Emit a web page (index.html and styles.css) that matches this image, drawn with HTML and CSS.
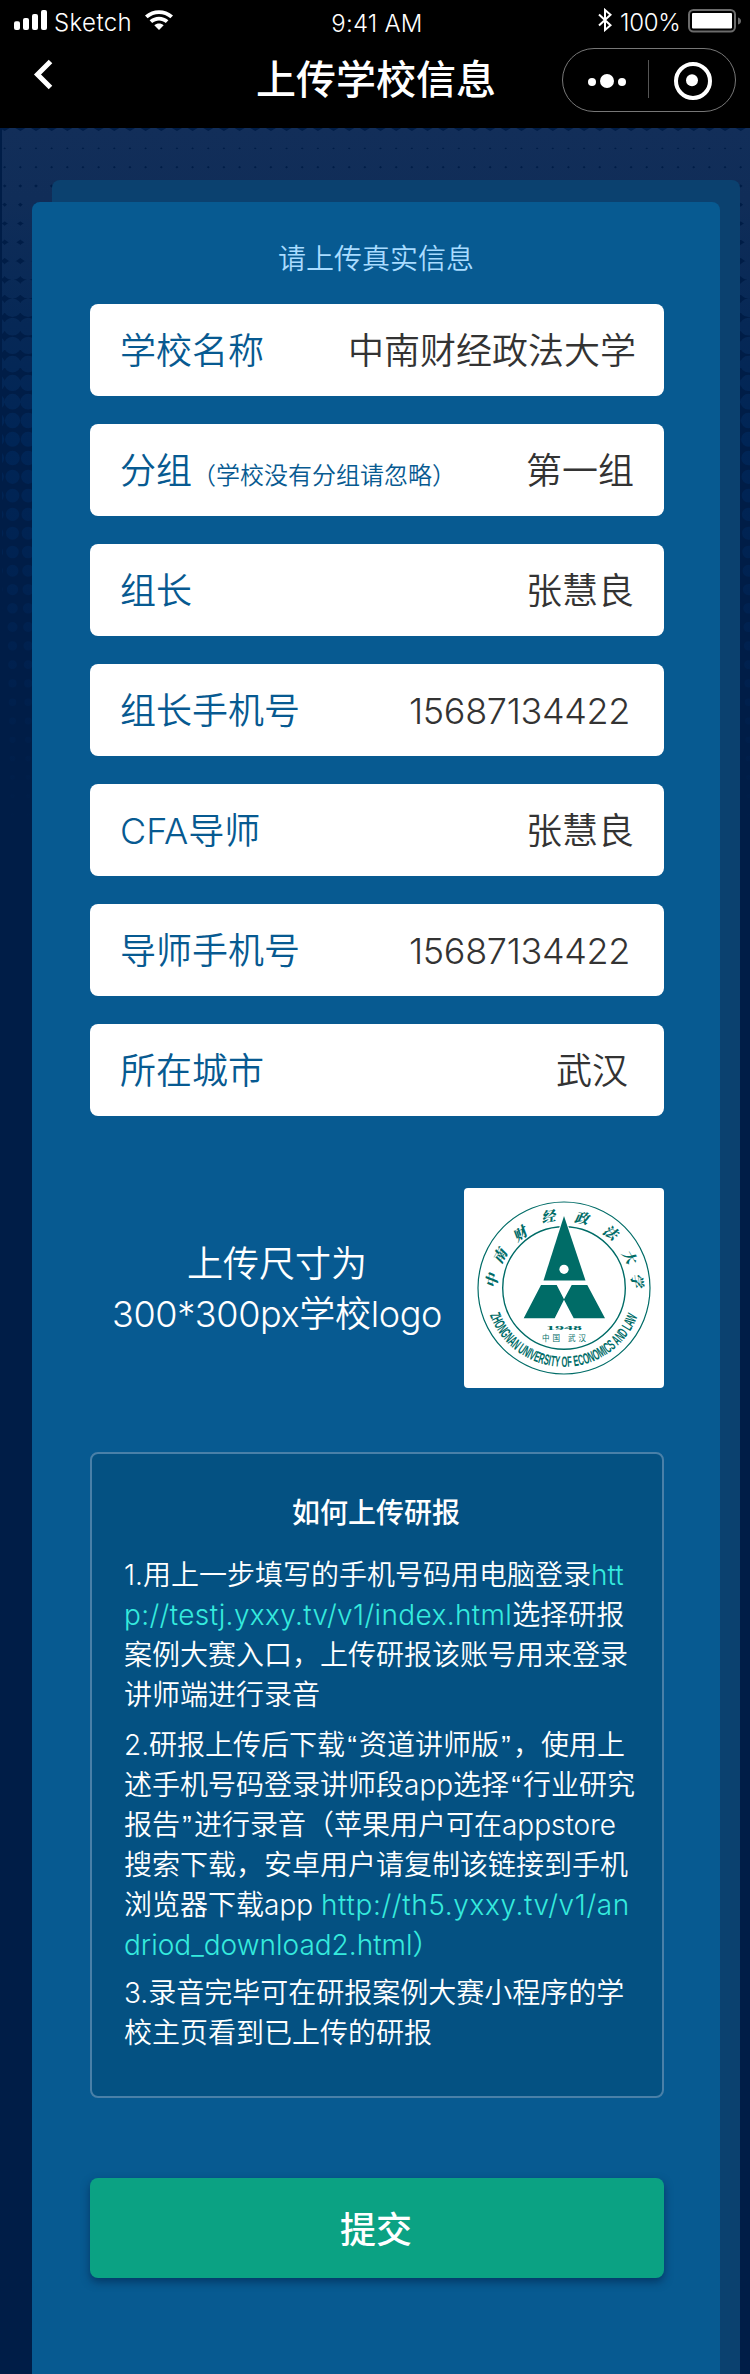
FILE: index.html
```html
<!DOCTYPE html>
<html lang="zh-CN">
<head>
<meta charset="utf-8">
<title>上传学校信息</title>
<link rel="stylesheet" href="styles.css">
</head>
<body>
<header class="header">
  <div class="status">
    <div class="status-left">
      <svg class="signal" width="33" height="20" viewBox="0 0 33 20" fill="#fff"><rect y="11.300" width="6" height="8.700" rx="2"/><rect x="9" y="8" width="6" height="12" rx="2"/><rect x="18" y="4" width="6" height="16" rx="2"/><rect x="27" width="6" height="20" rx="2"/></svg>
      <span class="carrier">Sketch</span>
      <svg class="wifi" width="28" height="20" viewBox="0 0 28 20" fill="#fff"><path d="M0 5.600C8-1.700 20-1.700 28 5.600L25.400 8.300C19 2.500 9 2.500 2.600 8.300Z"/><path d="M4.600 10.300C10 5.400 18 5.400 23.400 10.300L20.800 13C17 9.500 11 9.500 7.200 13Z"/><path d="M9.300 15.200C12 12.800 16 12.800 18.700 15.200L14 20Z"/></svg>
    </div>
    <span class="time">9:41 AM</span>
    <div class="status-right">
      <svg class="bluetooth" width="14" height="24" viewBox="0 0 14 24" fill="none" stroke="#fff" stroke-width="2"><path d="M1 6.500L12.500 17.300L7 22V2L12.500 6.700L1 17.500"/></svg>
      <span class="percent">100%</span>
      <svg width="53" height="24" viewBox="0 0 53 24"><rect x="1" y="1" width="46" height="21.500" rx="4.500" fill="none" stroke="#6b6b6b" stroke-width="2"/><rect x="4" y="4" width="40" height="15.500" rx="1" fill="#fff"/><path d="M50 8.500Q53 9.500 53 12T50 15.500Z" fill="#6b6b6b"/></svg>
    </div>
  </div>
  <div class="nav">
    <svg class="back" width="20" height="32" viewBox="0 0 20 32" fill="none" stroke="#fff" stroke-width="5"><path d="M17.500 2.500L4.500 15.500L17.500 28.500"/></svg>
    <h1 class="title">上传学校信息</h1>
    <svg class="capsule" width="174" height="64" viewBox="0 0 174 64" fill="#fff"><rect x=".5" y=".5" width="173" height="63" rx="31.500" fill="none" stroke="#777"/><circle cx="30" cy="34" r="4"/><circle cx="45" cy="33" r="7"/><circle cx="60" cy="34" r="4"/><path d="M86.500 12V50" stroke="#555"/><circle cx="131" cy="33" r="17" fill="none" stroke="#fff" stroke-width="4"/><circle cx="130" cy="32.300" r="6"/></svg>
  </div>
</header>

<main class="page">
  <svg class="pattern" id="pattern" width="750" height="720" viewBox="0 128 750 720"></svg>
  <div class="card-back"></div>
  <section class="card">
    <p class="hint">请上传真实信息</p>
    <div class="fields">
      <div class="field"><span class="label">学校名称</span><span class="value">中南财经政法大学</span></div>
      <div class="field"><span class="label">分组<small class="note">（学校没有分组请忽略）</small></span><span class="value name">第一组</span></div>
      <div class="field"><span class="label">组长</span><span class="value name">张慧良</span></div>
      <div class="field"><span class="label">组长手机号</span><span class="value phone">15687134422</span></div>
      <div class="field"><span class="label">CFA导师</span><span class="value name">张慧良</span></div>
      <div class="field"><span class="label">导师手机号</span><span class="value phone">15687134422</span></div>
      <div class="field"><span class="label">所在城市</span><span class="value city">武汉</span></div>
    </div>

    <div class="upload">
      <p class="upload-text">上传尺寸为<br><span class="size">300*300px学校logo</span></p>
      <svg class="emblem" width="200" height="200" viewBox="0 0 200 200">
        <defs><path id="arc" d="M25.800 127A79 79 0 0 0 174.200 127"/></defs>
        <g fill="none" stroke="#006c67"><circle cx="100" cy="100" r="86" stroke-width="1.200"/><circle cx="100" cy="100" r="61.300" stroke-width="1.400"/></g>
        <path d="M100 28L121.500 92.500H79.500Z" fill="#006c67" stroke="#fff" stroke-width="2" paint-order="stroke"/>
        <circle cx="100" cy="81.300" r="4.600" fill="#fff"/>
        <path d="M77 97H92.700L100 111.200L107.700 97H123.300L141 130.300H109.700L100 111.800L90.700 130.300H59.700Z" fill="#006c67"/>
        <g class="seal">
          <text transform="translate(27 92.700) rotate(-82)" y="6">中</text>
          <text transform="translate(35 67.700) rotate(-60)" y="6">南</text>
          <text transform="translate(55.300 45.300) rotate(-35)" y="6">财</text>
          <text transform="translate(84 27.700) rotate(-10)" y="6">经</text>
          <text transform="translate(117.700 29.300) rotate(10)" y="6">政</text>
          <text transform="translate(147 43.700) rotate(35)" y="6">法</text>
          <text transform="translate(166 68) rotate(60)" y="6">大</text>
          <text transform="translate(174 92) rotate(82)" y="6">学</text>
        </g>
        <text class="ring"><textPath href="#arc" textLength="191" lengthAdjust="spacingAndGlyphs">ZHONGNAN UNIVERSITY OF ECONOMICS AND LAW</textPath></text>
        <text class="year" x="82" y="142.300" textLength="36" lengthAdjust="spacingAndGlyphs">1948</text>
        <text class="place" x="78" y="152.800" textLength="44">中国 武汉</text>
      </svg>
    </div>

    <section class="guide">
      <h2 class="guide-title">如何上传研报</h2>
      <p class="step">1.用上一步填写的手机号码用电脑登录<a class="link">htt</a><br><a class="link url1">p://testj.yxxy.tv/v1/index.html</a>选择研报<br>案例大赛入口，上传研报该账号用来登录<br>讲师端进行录音</p>
      <p class="step second">2.研报上传后下载<span class="quote">“</span>资道讲师版<span class="quote">”</span>，使用上<br>述手机号码登录讲师段app选择<span class="quote">“</span>行业研究<br>报告<span class="quote">”</span>进行录音（苹果用户可在appstore<br>搜索下载，安卓用户请复制该链接到手机<br>浏览器下载app <a class="link url2">http://th5.yxxy.tv/v1/an</a><br><a class="link">driod_download2.html）</a></p>
      <p class="step">3.录音完毕可在研报案例大赛小程序的学<br>校主页看到已上传的研报</p>
    </section>

    <button class="submit">提交</button>
  </section>
</main>
<script src="pattern.js"></script>
</body>
</html>
```
FILE: pattern.js
```js
// Halftone background: round dots that shrink and fade downwards.
const svg = document.getElementById('pattern');
const NS = 'http://www.w3.org/2000/svg';
const add = (tag, attrs) => {
  const el = document.createElementNS(NS, tag);
  for (const k in attrs) el.setAttribute(k, attrs[k]);
  svg.appendChild(el);
};
svg.innerHTML = '<defs><linearGradient id="fade" gradientUnits="userSpaceOnUse" x1="0" y1="128" x2="0" y2="830">' +
  '<stop offset="0" stop-color="#122e59"/><stop offset=".1" stop-color="#102d58"/><stop offset=".28" stop-color="#062856"/>' +
  '<stop offset=".45" stop-color="#002556"/><stop offset=".75" stop-color="#00214f"/><stop offset="1" stop-color="#001d47"/></linearGradient>' +
  '<clipPath id="edge"><rect x="2" y="128" width="748" height="720"/></clipPath></defs>';
const stops = [[130, 11.7], [148, 11.5], [205, 10.8], [289, 9.5], [415, 7.7], [550, 6.3], [645, 4.7], [820, 1.8]];
const radius = y => {
  for (let i = 1; i < stops.length; i++) {
    const [y0, r0] = stops[i - 1], [y1, r1] = stops[i];
    if (y <= y1) return r0 + (r1 - r0) * (y - y0) / (y1 - y0);
  }
  return 0;
};
let d = '';
for (let row = 0; row < 37; row++) {
  const y = 138.8 + row * 18.78, r = radius(y);
  for (let col = -1; col < 49; col++) {
    const x = 12.5 + col * 15.66;
    if (row > 5 && x > 50 && x < 720) continue;
    d += `M${x - r} ${y}a${r} ${r} 0 1 0 ${2 * r} 0a${r} ${r} 0 1 0 ${-2 * r} 0`;
  }
}
add('path', { d, fill: 'url(#fade)', 'clip-path': 'url(#edge)' });
let t = '';
for (let col = 0; col < 49; col++) {
  const x = 4.7 + col * 15.66;
  t += `M${x - 5} 128h10l-5 3z`;
}
add('path', { d: t, fill: '#001d47' });
```
FILE: styles.css
```css
* { box-sizing: border-box; margin: 0; padding: 0; }
body {
  width: 750px;
  background: #001d47;
  font-family: Inter, "Noto Sans CJK SC", sans-serif;
  font-weight: 350;
  font-feature-settings: "calt" 0;
  color: #fff;
}
svg { display: block; flex: none; }

.header { height: 128px; background: #000; }
.status {
  height: 44px;
  display: grid;
  grid-template-columns: 1fr auto 1fr;
  padding: 0 9px 0 14px;
  font-size: 24px;
  line-height: 28px;
}
.status-left, .status-right { display: flex; align-items: flex-start; }
.status-right { justify-content: flex-end; padding-top: 9px; }
.status-left { padding-top: 10px; }
.carrier { margin: -1px 0 0 7px; width: 91px; letter-spacing: 0.4px; }
.time { padding-top: 10px; margin-right: 1px; letter-spacing: 0.2px; }
.bluetooth { margin: -1px 8px 0 0; }
.percent { width: 68px; letter-spacing: -0.3px; }

.nav {
  height: 84px;
  display: grid;
  grid-template-columns: 174px 1fr 174px;
  padding: 0 14px;
  align-items: start;
}
.back { margin: 15px 0 0 19px; }
.title {
  margin-left: 2px;
  font-size: 40px;
  line-height: 60px;
  padding-top: 6px;
  font-weight: 500;
  text-align: center;
}
.capsule { margin-top: 4px; }

.page {
  display: grid;
  height: 2246px;
  grid-template-columns: 32px 20px 668px 20px 10px;
  grid-template-rows: 52px 22px 1fr;
}
.pattern { grid-area: 1 / 1 / 4 / 6; }
.card-back {
  grid-area: 2 / 3 / 4 / 5;
  background: #0b416f;
  border-radius: 8px 8px 0 0;
}
.card {
  grid-area: 3 / 2 / 4 / 4;
  background: #075a91;
  border-radius: 8px 8px 0 0;
  padding: 37px 56px 0 58px;
}
.hint {
  margin-right: 2px;
  font-size: 28px;
  line-height: 40px;
  text-align: center;
  color: #a9dcff;
}
.fields { display: grid; gap: 28px; margin-top: 25px; }
.field {
  height: 92px;
  background: #fff;
  border-radius: 8px;
  padding: 2px 28px 0 30px;
  display: flex;
  justify-content: space-between;
  align-items: center;
  font-size: 36px;
  line-height: 50px;
  white-space: nowrap;
}
.label { color: #075a91; }
.note { font-size: 24px; line-height: 0; }
.value { color: #333; }
.name { margin-right: 2px; }
.phone { margin-right: 6px; letter-spacing: -0.35px; }
.city { margin-right: 8px; }

.upload {
  display: flex;
  justify-content: space-between;
  margin-top: 72px;
}
.upload-text {
  width: 374px;
  padding-top: 51px;
  font-size: 36px;
  line-height: 50px;
  text-align: center;
  white-space: nowrap;
}
.size { letter-spacing: -0.35px; }
.emblem { background: #fff; border-radius: 4px; }
.seal text {
  font: italic 900 14px "Noto Serif CJK SC", "Noto Sans CJK SC", serif;
  text-anchor: middle;
  fill: #006c67;
}
.ring { font: bold 15px "Liberation Sans", sans-serif; fill: #006c67; }
.year { font: bold 7px "Liberation Serif", serif; fill: #006c67; }
.place { font: 7.5px "Noto Sans CJK SC", sans-serif; fill: #006c67; }

.guide {
  margin-top: 64px;
  height: 646px;
  border: 2px solid #4a80a8;
  border-radius: 8px;
  background: #045182;
  padding: 39px 0 0 32px;
  font-size: 28px;
  line-height: 40px;
  white-space: nowrap;
}
.guide-title {
  font-size: 28px;
  font-weight: 500;
  text-align: center;
  margin: 0 34px 22px 0;
}
.step { margin-bottom: 10px; }
.second { margin-bottom: 8px; }
.link { color: #35ebde; }
.quote { font-family: "Liberation Sans", sans-serif; line-height: 0; padding: 0 2.3px; }
.url1 { letter-spacing: 0.37px; }
.url2 { letter-spacing: 0.63px; }

.submit {
  display: block;
  width: 574px;
  height: 100px;
  margin-top: 80px;
  padding: 3px 2px 0 0;
  border: 0;
  border-radius: 8px;
  background: #0ba283;
  box-shadow: 0 4px 8px rgba(0, 24, 60, .5);
  color: #fff;
  font: 500 36px/50px Inter, "Noto Sans CJK SC", sans-serif;
}
```
